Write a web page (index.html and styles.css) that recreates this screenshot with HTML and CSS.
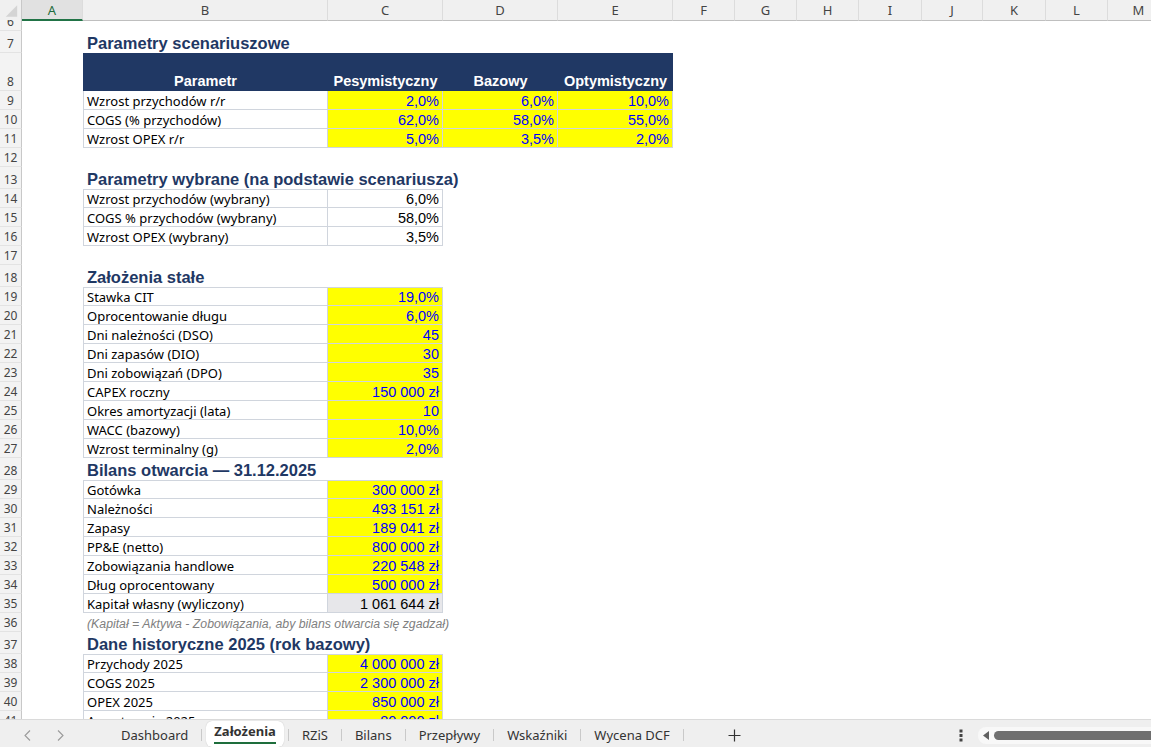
FILE: index.html
```html
<!DOCTYPE html>
<html lang="pl">
<head>
  <meta charset="UTF-8">
  <meta name="viewport" content="width=device-width, initial-scale=1.0">
  <link rel="stylesheet" href="styles.css">
  <title>Założenia</title>
</head>
<body>
  <div class="sheet">
    <div class="cols">
      <div class="ch corner">
        <svg width="22" height="20" viewBox="0 0 22 20"><polygon points="18,5 18,17 6,17" fill="#d4d4d4"/></svg>
      </div>
      <div class="ch sel">A</div>
      <div class="ch">B</div>
      <div class="ch">C</div>
      <div class="ch">D</div>
      <div class="ch">E</div>
      <div class="ch">F</div>
      <div class="ch">G</div>
      <div class="ch">H</div>
      <div class="ch">I</div>
      <div class="ch">J</div>
      <div class="ch">K</div>
      <div class="ch">L</div>
      <div class="ch">M</div>
    </div>

    <div class="row r6"><div class="rh">6</div></div>
    <div class="row big"><div class="rh">7</div><div class="title">Parametry scenariuszowe</div></div>
    <div class="row head">
      <div class="rh">8</div>
      <div class="hd b">Parametr</div>
      <div class="hd">Pesymistyczny</div>
      <div class="hd">Bazowy</div>
      <div class="hd">Optymistyczny</div>
    </div>
    <div class="row"><div class="rh">9</div><div class="lbl">Wzrost przychodów r/r</div><div class="num in">2,0%</div><div class="num in">6,0%</div><div class="num in">10,0%</div></div>
    <div class="row"><div class="rh">10</div><div class="lbl">COGS (% przychodów)</div><div class="num in">62,0%</div><div class="num in">58,0%</div><div class="num in">55,0%</div></div>
    <div class="row"><div class="rh">11</div><div class="lbl">Wzrost OPEX r/r</div><div class="num in">5,0%</div><div class="num in">3,5%</div><div class="num in">2,0%</div></div>
    <div class="row"><div class="rh">12</div></div>

    <div class="row big"><div class="rh">13</div><div class="title">Parametry wybrane (na podstawie scenariusza)</div></div>
    <div class="row first"><div class="rh">14</div><div class="lbl">Wzrost przychodów (wybrany)</div><div class="num">6,0%</div></div>
    <div class="row"><div class="rh">15</div><div class="lbl">COGS % przychodów (wybrany)</div><div class="num">58,0%</div></div>
    <div class="row"><div class="rh">16</div><div class="lbl">Wzrost OPEX (wybrany)</div><div class="num">3,5%</div></div>
    <div class="row"><div class="rh">17</div></div>

    <div class="row big"><div class="rh">18</div><div class="title">Założenia stałe</div></div>
    <div class="row first"><div class="rh">19</div><div class="lbl">Stawka CIT</div><div class="num in">19,0%</div></div>
    <div class="row"><div class="rh">20</div><div class="lbl">Oprocentowanie długu</div><div class="num in">6,0%</div></div>
    <div class="row"><div class="rh">21</div><div class="lbl">Dni należności (DSO)</div><div class="num in">45</div></div>
    <div class="row"><div class="rh">22</div><div class="lbl">Dni zapasów (DIO)</div><div class="num in">30</div></div>
    <div class="row"><div class="rh">23</div><div class="lbl">Dni zobowiązań (DPO)</div><div class="num in">35</div></div>
    <div class="row"><div class="rh">24</div><div class="lbl">CAPEX roczny</div><div class="num in">150&nbsp;000&nbsp;zł</div></div>
    <div class="row"><div class="rh">25</div><div class="lbl">Okres amortyzacji (lata)</div><div class="num in">10</div></div>
    <div class="row"><div class="rh">26</div><div class="lbl">WACC (bazowy)</div><div class="num in">10,0%</div></div>
    <div class="row"><div class="rh">27</div><div class="lbl">Wzrost terminalny (g)</div><div class="num in">2,0%</div></div>

    <div class="row big"><div class="rh">28</div><div class="title">Bilans otwarcia — 31.12.2025</div></div>
    <div class="row first"><div class="rh">29</div><div class="lbl">Gotówka</div><div class="num in">300&nbsp;000&nbsp;zł</div></div>
    <div class="row"><div class="rh">30</div><div class="lbl">Należności</div><div class="num in">493&nbsp;151&nbsp;zł</div></div>
    <div class="row"><div class="rh">31</div><div class="lbl">Zapasy</div><div class="num in">189&nbsp;041&nbsp;zł</div></div>
    <div class="row"><div class="rh">32</div><div class="lbl">PP&amp;E (netto)</div><div class="num in">800&nbsp;000&nbsp;zł</div></div>
    <div class="row"><div class="rh">33</div><div class="lbl">Zobowiązania handlowe</div><div class="num in">220&nbsp;548&nbsp;zł</div></div>
    <div class="row"><div class="rh">34</div><div class="lbl">Dług oprocentowany</div><div class="num in">500&nbsp;000&nbsp;zł</div></div>
    <div class="row"><div class="rh">35</div><div class="lbl">Kapitał własny (wyliczony)</div><div class="num calc">1&nbsp;061&nbsp;644&nbsp;zł</div></div>
    <div class="row"><div class="rh">36</div><div class="note">(Kapitał = Aktywa - Zobowiązania, aby bilans otwarcia się zgadzał)</div></div>

    <div class="row big"><div class="rh">37</div><div class="title">Dane historyczne 2025 (rok bazowy)</div></div>
    <div class="row first"><div class="rh">38</div><div class="lbl">Przychody 2025</div><div class="num in">4&nbsp;000&nbsp;000&nbsp;zł</div></div>
    <div class="row"><div class="rh">39</div><div class="lbl">COGS 2025</div><div class="num in">2&nbsp;300&nbsp;000&nbsp;zł</div></div>
    <div class="row"><div class="rh">40</div><div class="lbl">OPEX 2025</div><div class="num in">850&nbsp;000&nbsp;zł</div></div>
    <div class="row"><div class="rh">41</div><div class="lbl">Amortyzacja 2025</div><div class="num in">80&nbsp;000&nbsp;zł</div></div>
  </div>

  <div class="tabs">
    <div class="nav">
      <svg width="7" height="11" viewBox="0 0 7 11"><polyline points="6,0.5 1,5.5 6,10.5" fill="none" stroke="#9a9a9a" stroke-width="1.1"/></svg>
      <svg width="7" height="11" viewBox="0 0 7 11"><polyline points="1,0.5 6,5.5 1,10.5" fill="none" stroke="#9a9a9a" stroke-width="1.1"/></svg>
    </div>
    <div class="tab">Dashboard</div>
    <div class="sep"></div>
    <div class="tab on"><span>Założenia</span></div>
    <div class="sep"></div>
    <div class="tab">RZiS</div>
    <div class="sep"></div>
    <div class="tab">Bilans</div>
    <div class="sep"></div>
    <div class="tab">Przepływy</div>
    <div class="sep"></div>
    <div class="tab">Wskaźniki</div>
    <div class="sep"></div>
    <div class="tab">Wycena DCF</div>
    <div class="sep"></div>
    <div class="add">
      <svg width="13" height="13" viewBox="0 0 13 13"><path d="M6.5 0.5v12M0.5 6.5h12" stroke="#333" stroke-width="1.2"/></svg>
    </div>
    <div class="more">
      <svg width="4" height="13" viewBox="0 0 4 13"><rect x="0.5" y="0.5" width="3" height="3" fill="#444"/><rect x="0.5" y="5" width="3" height="3" fill="#444"/><rect x="0.5" y="9.5" width="3" height="3" fill="#444"/></svg>
    </div>
    <div class="scroll">
      <svg width="7" height="9" viewBox="0 0 7 9"><polygon points="6,0 6,9 0,4.5" fill="#606060"/></svg>
      <div class="thumb"></div>
    </div>
  </div>
</body>
</html>
```

FILE: styles.css
```css
body {
  margin: 0;
  height: 747px;
  overflow: hidden;
  display: flex;
  flex-direction: column;
  background-color: #fff;
  font-family: "Noto Sans", "Open Sans", sans-serif;
  color: #000;
}

.sheet {
  flex: 1;
  overflow: hidden;
}

.cols,
.row {
  display: grid;
  grid-template-columns: 22px 61px 245px 115px 115px 115px 62px 62px 62px 63px 61px 63px 62px 62px;
}

/* column headers */
.cols {
  height: 20px;
  background-color: #f0f0f0;
}

.ch {
  box-sizing: border-box;
  border-right: 1px solid #dcdcdc;
  border-bottom: 1px solid #bfbfbf;
  font-size: 13px;
  color: #444;
  display: flex;
  align-items: center;
  justify-content: center;
}

.ch.corner {
  background-color: #f0f0f0;
  border-right-color: #c8c8c8;
}

.ch.sel {
  background-color: #e1e1e1;
  border-bottom: 2px solid #217346;
  color: #1e6b3c;
}

/* rows */
.row {
  height: 19px;
}

.row.r6 {
  height: 11px;
}

.row.big {
  height: 22px;
}

.row.head {
  height: 38px;
}

.rh {
  grid-column: 1;
  box-sizing: border-box;
  background-color: #f3f3f3;
  border-right: 1px solid #c8c8c8;
  border-bottom: 1px solid #e3e3e3;
  font-size: 12px;
  line-height: 14px;
  color: #444;
  display: flex;
  align-items: flex-end;
  justify-content: center;
  padding-bottom: 1px;
  overflow: hidden;
}

.title {
  grid-column: 3 / 12;
  font-family: "Liberation Sans", Arial, sans-serif;
  font-weight: 700;
  font-size: 16.5px;
  color: #1f3864;
  white-space: nowrap;
  display: flex;
  align-items: flex-end;
  padding: 0 0 0 4px;
  line-height: 19px;
}

.hd {
  background-color: #203864;
  color: #fff;
  font-family: "Liberation Sans", Arial, sans-serif;
  font-weight: 700;
  font-size: 14.5px;
  white-space: nowrap;
  display: flex;
  align-items: flex-end;
  justify-content: center;
  padding-bottom: 1px;
  line-height: 17px;
}

.hd.b {
  grid-column: 3;
}

.lbl,
.num {
  box-sizing: border-box;
  border-right: 1px solid #d0d5dd;
  border-bottom: 1px solid #d0d5dd;
  display: flex;
  align-items: flex-end;
  white-space: nowrap;
  overflow: hidden;
}

.row.first .lbl,
.row.first .num {
  border-top: 1px solid #d0d5dd;
}

.lbl {
  grid-column: 3;
  border-left: 1px solid #d0d5dd;
  font-size: 13px;
  line-height: 16px;
  padding: 0 0 0 3px;
}

.num {
  justify-content: flex-end;
  font-family: "Liberation Sans", Arial, sans-serif;
  font-size: 14.5px;
  line-height: 16px;
  padding: 0 3px 0 0;
}

.num.in {
  background-color: #ffff00;
  color: #0000ff;
}

.num.calc {
  background-color: #e7e7ea;
}

.note {
  grid-column: 3 / 12;
  font-family: "Liberation Sans", Arial, sans-serif;
  font-style: italic;
  font-size: 12.3px;
  color: #808080;
  white-space: nowrap;
  display: flex;
  align-items: flex-end;
  padding: 0 0 1px 4px;
}

/* sheet tabs */
.tabs {
  height: 28px;
  box-sizing: border-box;
  border-top: 1px solid #dadada;
  background-color: #efefef;
  display: flex;
  align-items: stretch;
  font-size: 13px;
  color: #333;
}

.nav {
  width: 108px;
  box-sizing: border-box;
  padding: 3px 0 0 24px;
  display: flex;
  align-items: center;
  gap: 26px;
}

.tab {
  padding: 3px 13px 0;
  display: flex;
  align-items: center;
  white-space: nowrap;
}

.tab.on {
  background-color: #fff;
  border-radius: 6px;
  margin: 1px 4px 0;
  padding: 0 8px 2px;
  font-weight: 700;
  box-shadow: 0 0 1px rgba(0, 0, 0, 0.25);
}

.tab.on span {
  border-bottom: 2px solid #1e6e3c;
  padding-bottom: 2px;
}

.sep {
  width: 1px;
  background-color: #c9c9c9;
  margin: 9px 0 6px;
}

.add {
  margin-left: 44px;
  padding-top: 3px;
  display: flex;
  align-items: center;
}

.more {
  margin-left: auto;
  padding-top: 3px;
  display: flex;
  align-items: center;
}

.scroll {
  width: 173px;
  box-sizing: border-box;
  margin: 7px 0 3px 15px;
  border-radius: 8px 0 0 8px;
  background-color: #f8f8f8;
  display: flex;
  align-items: center;
  padding-left: 5px;
  gap: 4px;
}

.thumb {
  flex: 1;
  height: 9px;
  border-radius: 5px 0 0 5px;
  background-color: #6f6f6f;
}
```
